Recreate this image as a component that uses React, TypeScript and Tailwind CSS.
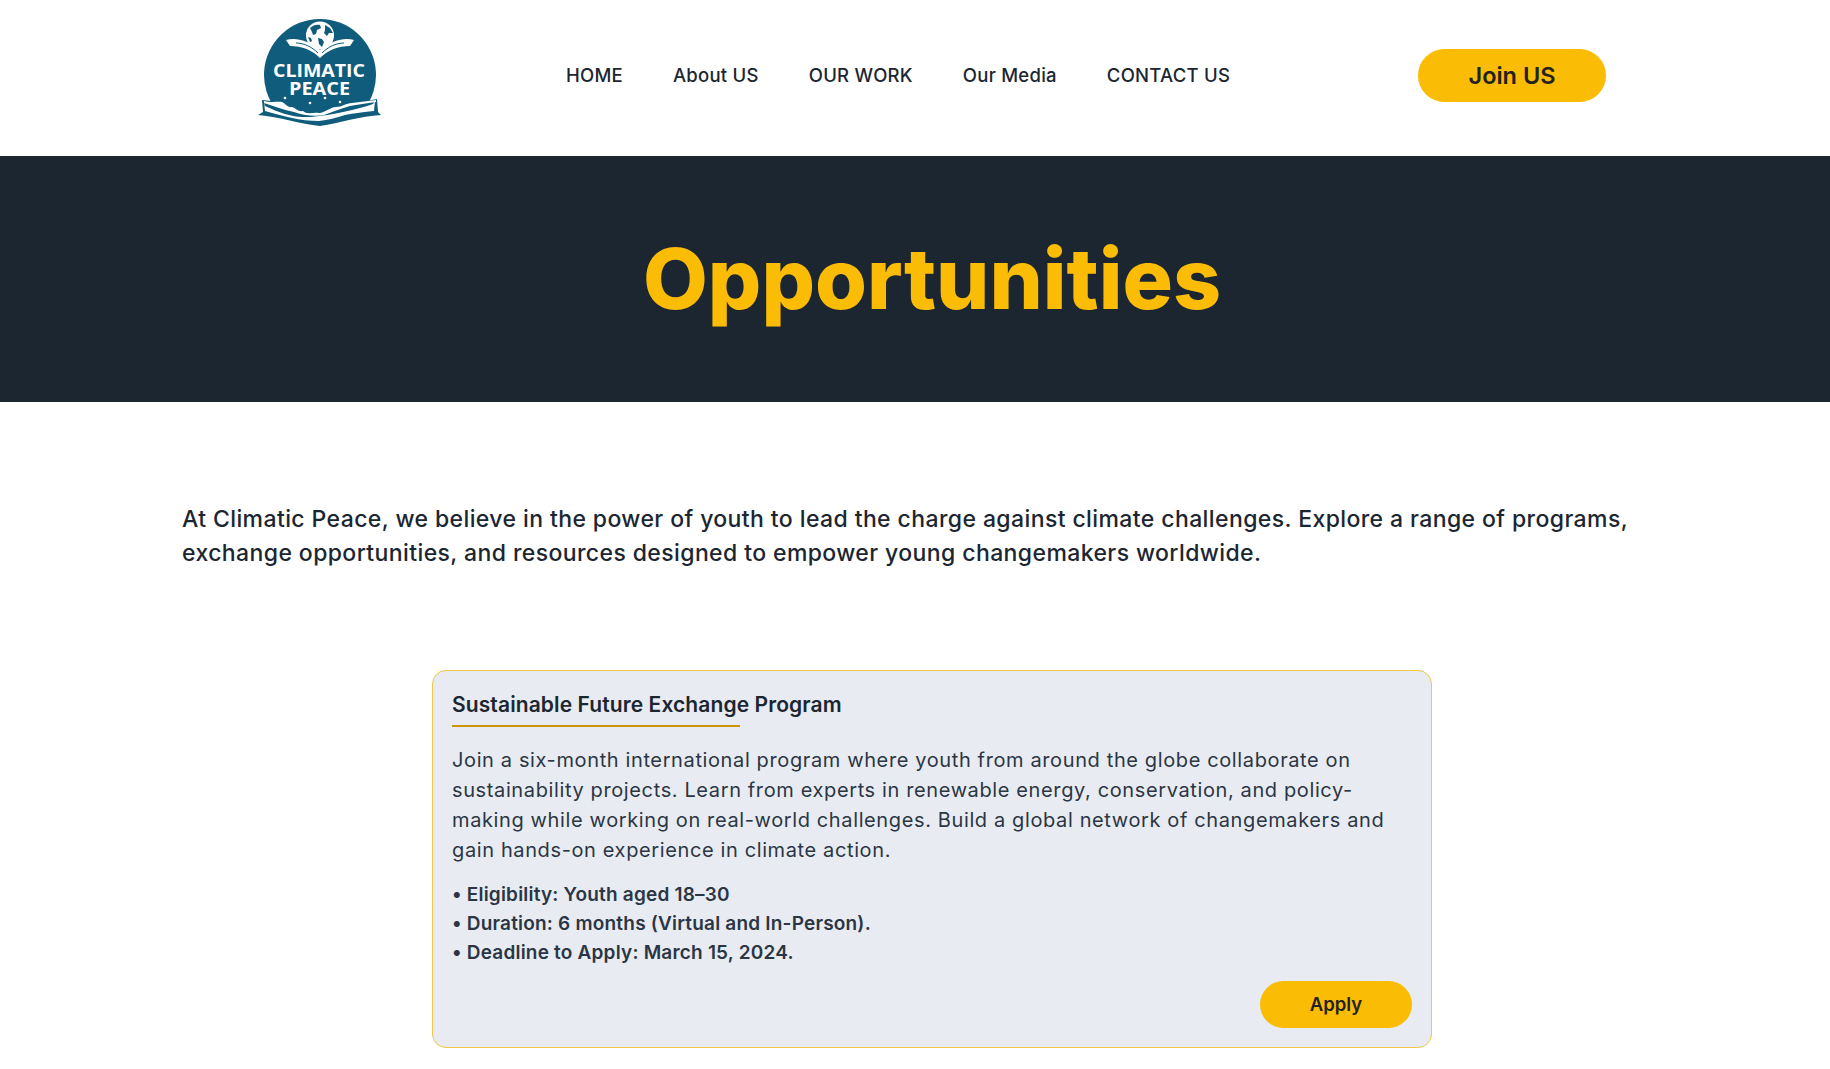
const navLinks = ['HOME', 'About US', 'OUR WORK', 'Our Media', 'CONTACT US'];

const details = [
  'Eligibility: Youth aged 18–30',
  'Duration: 6 months (Virtual and In-Person).',
  'Deadline to Apply: March 15, 2024.',
];

function Logo() {
  return (
    <svg width="160" height="140" viewBox="0 0 160 140" aria-label="Climatic Peace logo">
      <path d="M36.3 110A56 56 0 1 1 123.7 110Z" fill="#0f5c7c" />
      {/* globe */}
      <circle cx="80" cy="35.5" r="14" fill="#fff" />
      <path d="M70 28c3-3 7-4 10-3l1 3-4 2-1 4-3 1-1-3zM85 25l5 3 3 5-4 0-2 3-3-3 1-3zM78 38l4 1 2 3-2 5-3-3zM68 37l3 1 1 3-2 1z" fill="#0f5c7c" />
      {/* open book */}
      <path d="M46 40C55 37 68 40 80 50 92 40 105 37 114 40L110 46C98 46 88 50 80 58 72 50 62 46 50 46Z" fill="#fff" />
      <path d="M56 43C64 43 72 47 78 53M104 43C96 43 88 47 82 53" fill="none" stroke="#0f5c7c" strokeWidth="1" />
      <text x="79" y="77" textAnchor="middle" textLength={92} lengthAdjust="spacingAndGlyphs" fill="#fff" fontFamily="'Open Sans', sans-serif" fontSize="17.5" fontWeight="700">CLIMATIC</text>
      <text x="79.5" y="95" textAnchor="middle" textLength={61} lengthAdjust="spacingAndGlyphs" fill="#fff" fontFamily="'Open Sans', sans-serif" fontSize="17.5" fontWeight="700">PEACE</text>
      {/* banner: teal body, jagged shoreline, white band */}
      <path d="M22 100C40 102 60 104 80 108 100 106 120 102 137 99L138 112 141 115C120 116 100 123 80 126 60 124 40 117 18 115L23 112Z" fill="#0f5c7c" />
      <path d="M24 101C32 103 38 101 42 102 46 104 48 108 52 107 56 108 58 112 63 111 67 115 73 112 79 113 85 113 90 107 96 107 102 107 106 103 112 103 120 102 128 101 136 100L136 102C126 103 118 105 110 106 100 109 92 112 84 115 74 117 62 115 54 112 44 110 34 106 24 103Z" fill="#fff" />
      <path d="M24 102L25 106C32 109 38 112 45 114 52 116 58 117 62 117 68 117 74 117 79 116 90 115 102 112 112 110 120 108 128 106 133 104L135 101 134 111C124 112 114 113 105 115 96 118 88 120 79 121 70 121 60 120 52 118 42 116 33 113 25 111Z" fill="#fff" />
      <circle cx="45" cy="98" r="1.3" fill="#fff" />
      <circle cx="70" cy="103" r="1.3" fill="#fff" />
      <circle cx="85" cy="98" r="1.3" fill="#fff" />
      <circle cx="100" cy="102" r="1.3" fill="#fff" />
    </svg>
  );
}

export default function App() {
  return (
    <div className="min-h-screen overflow-hidden bg-white font-['Inter',sans-serif] text-[#1b2631]">
      <header className="flex h-[156px] items-center pb-[5px] pl-[240px] pr-[224px]">
        <div className="shrink-0 self-start">
          <Logo />
        </div>
        <nav className="ml-[166px] flex gap-[50px] text-[18.5px] font-medium tracking-[0.25px]">
          {navLinks.map((link) => (
            <a key={link} href="#">{link}</a>
          ))}
        </nav>
        <a
          href="#"
          className="ml-auto flex h-[53px] w-[188px] items-center justify-center rounded-full bg-[#fbbc05] text-[23.5px] font-semibold text-[#222]"
        >
          Join US
        </a>
      </header>

      <section className="flex h-[246px] items-center justify-center bg-[#1b2631] pl-[34px]">
        <h1 className="text-[84px] font-extrabold leading-none text-[#fbbc05]">Opportunities</h1>
      </section>

      <main className="pl-[182px]">
        <p className="mt-[100px] w-[1500px] text-[23px] font-medium leading-[34px] tracking-[0.4px] text-[#1b2631]">
          At Climatic Peace, we believe in the power of youth to lead the charge against climate challenges. Explore a range of programs, exchange opportunities, and resources designed to empower young changemakers worldwide.
        </p>

        <article className="ml-[250px] mt-[100px] h-[378px] w-[1000px] rounded-[14px] border border-[#f2c648] bg-[#e8ecf2] px-[19px] pt-[19px]">
          <h2 className="text-[21px] font-semibold leading-[30px] tracking-[0.1px]">Sustainable Future Exchange Program</h2>
          <div className="mt-[5px] h-[2px] w-[288px] bg-[#c9960c]" />
          <p className="mt-[18px] text-[20px] leading-[30px] tracking-[0.62px] text-[#2b3644]">
            Join a six-month international program where youth from around the globe collaborate on sustainability projects. Learn from experts in renewable energy, conservation, and policy-making while working on real-world challenges. Build a global network of changemakers and gain hands-on experience in climate action.
          </p>
          <ul className="mt-[15px] text-[19px] font-semibold leading-[29px] tracking-[0.2px] text-[#2b3644]">
            {details.map((item) => (
              <li key={item}>• {item}</li>
            ))}
          </ul>
          <div className="mt-[14px] flex justify-end">
            <button className="h-[47px] w-[152px] rounded-full bg-[#fbbc05] text-[18.5px] font-semibold text-[#222]">
              Apply
            </button>
          </div>
        </article>
      </main>
    </div>
  );
}
